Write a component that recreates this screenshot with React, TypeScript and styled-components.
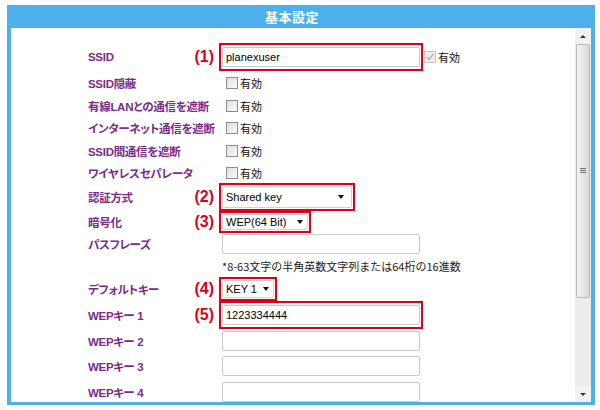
import React from 'react';
import styled, { createGlobalStyle } from 'styled-components';

const GlobalStyle = createGlobalStyle`
  html, body {
    margin: 0;
    padding: 0;
    background: #fff;
  }
  body {
    font-family: "Noto Sans CJK JP", "Liberation Sans", sans-serif;
  }
`;

const Window = styled.div`
  margin: 5px 0 0 7px;
  width: 588px;
  height: 400px;
  box-sizing: border-box;
  background: #4cb0ec;
  padding: 0 4px 3px 4px;
  display: flex;
  flex-direction: column;
`;

const Title = styled.div`
  height: 23px;
  flex: none;
  display: flex;
  align-items: center;
  justify-content: center;
  padding-right: 18px;
  color: #fff;
  font-weight: 700;
  font-size: 13px;
  letter-spacing: 0.5px;
`;

const Body = styled.div`
  flex: 1;
  min-height: 0;
  display: flex;
  background: #fff;
  overflow: hidden;
`;

const Content = styled.div`
  flex: 1;
  padding: 15px 0 0 77px;
  overflow: hidden;
`;

const Row = styled.div<{ $h: number }>`
  display: flex;
  align-items: center;
  height: ${(p) => p.$h}px;
`;

const LabelCell = styled.div`
  width: 131px;
  flex: none;
  display: flex;
  align-items: center;
  padding-right: 5px;
  box-sizing: border-box;
`;

const Label = styled.span`
  color: #7b2b88;
  font-family: "Liberation Sans", "Noto Sans CJK JP", sans-serif;
  font-weight: 700;
  font-size: 11.5px;
  letter-spacing: -0.3px;
  font-feature-settings: "palt";
  white-space: nowrap;
`;

const Marker = styled.span`
  margin-left: auto;
  color: #df0018;
  font: 700 16px "Liberation Sans", sans-serif;
  line-height: 1;
`;

const Mark = styled.div<{ $on?: boolean; $tall?: boolean }>`
  display: inline-flex;
  align-items: center;
  border: 2px solid ${(p) => (p.$on ? '#df0018' : 'transparent')};
  padding: ${(p) => (p.$tall ? '2px 1px' : '1px')};
`;

const TextBox = styled.input`
  width: 198px;
  height: 20px;
  box-sizing: border-box;
  margin: 0;
  border: 1px solid #c9c9c9;
  border-radius: 2px;
  padding: 0 3px;
  font: 11px "Liberation Sans", sans-serif;
  color: #000;
  background: #fff;
  outline: none;
`;

const Select = styled.div<{ $w: number; $h: number; $pr: number }>`
  width: ${(p) => p.$w}px;
  height: ${(p) => p.$h}px;
  box-sizing: border-box;
  border: 1px solid #d2d2d2;
  border-radius: 2px;
  display: flex;
  align-items: center;
  justify-content: space-between;
  padding: 0 ${(p) => p.$pr}px 0 3px;
  font: 11px "Liberation Sans", sans-serif;
  color: #000;
  background: #fff;
  white-space: nowrap;
`;

const Caret = styled.span`
  width: 0;
  height: 0;
  border-left: 3.5px solid transparent;
  border-right: 3.5px solid transparent;
  border-top: 4px solid #111;
`;

const Option = styled.label<{ $gap?: number }>`
  display: inline-flex;
  align-items: center;
  margin-left: ${(p) => p.$gap ?? 4}px;
  font-size: 11px;
  color: #111;
`;

const Check = styled.span<{ $disabled?: boolean }>`
  width: 12px;
  height: 12px;
  box-sizing: border-box;
  margin-right: 2px;
  border: 1px solid ${(p) => (p.$disabled ? '#c4c4c4' : '#8c8c8c')};
  background: ${(p) =>
    p.$disabled ? '#eeeeee' : 'linear-gradient(135deg, #dedede, #fbfbfb)'};
  display: flex;
  align-items: center;
  justify-content: center;
`;

const Note = styled.div`
  padding-left: 3px;
  font-size: 11px;
  color: #222;
  white-space: nowrap;
`;

const Scrollbar = styled.div`
  width: 16px;
  flex: none;
  background: #ececec;
  display: flex;
  flex-direction: column;
`;

const ScrollButton = styled.div`
  height: 16px;
  flex: none;
  display: flex;
  align-items: center;
  justify-content: center;
  background: #f2f2f2;
`;

const Arrow = styled.span<{ $up?: boolean }>`
  width: 0;
  height: 0;
  border-left: 3px solid transparent;
  border-right: 3px solid transparent;
  ${(p) => (p.$up ? 'border-bottom: 3px solid #333;' : 'border-top: 3px solid #333;')}
`;

const Thumb = styled.div`
  height: 254px;
  flex: none;
  margin: 0 1px;
  box-sizing: border-box;
  border: 1px solid #b7b7b7;
  border-radius: 2px;
  background: linear-gradient(to right, #f4f4f4, #dadada);
  display: flex;
  align-items: center;
  justify-content: center;
`;

const Track = styled.div`
  flex: 1;
`;

const Grip = () => (
  <svg width="6" height="6" viewBox="0 0 6 6">
    <path d="M0 0.5h6M0 2.5h6M0 4.5h6" stroke="#6f6f6f" strokeWidth="1" />
  </svg>
);

const Tick = () => (
  <svg width="10" height="10" viewBox="0 0 10 10">
    <path d="M2 5l2 2.5L8.5 2" fill="none" stroke="#b3b3b3" strokeWidth="1.4" />
  </svg>
);

const Enabled = ({ gap, disabled }: { gap?: number; disabled?: boolean }) => (
  <Option $gap={gap}>
    <Check $disabled={disabled}>{disabled && <Tick />}</Check>
    有効
  </Option>
);

const Field = ({ label, marker, h, children }: { label?: string; marker?: string; h: number; children?: React.ReactNode }) => (
  <Row $h={h}>
    <LabelCell>
      {label && <Label>{label}</Label>}
      {marker && <Marker>{marker}</Marker>}
    </LabelCell>
    {children}
  </Row>
);

const toggles: [string, number][] = [
  ['SSID隠蔽', 23],
  ['有線LANとの通信を遮断', 23],
  ['インターネット通信を遮断', 22],
  ['SSID間通信を遮断', 23],
  ['ワイヤレスセパレータ', 21],
];

const App = () => {
  return (
    <>
      <GlobalStyle />
      <Window>
        <Title>基本設定</Title>
        <Body>
          <Content>
            <Field label="SSID" marker="(1)" h={28}>
              <Mark $on $tall>
                <TextBox readOnly value="planexuser" />
              </Mark>
              <Enabled gap={1} disabled />
            </Field>
            {toggles.map(([label, h]) => (
              <Field key={label} label={label} h={h}>
                <Mark>
                  <Enabled />
                </Mark>
              </Field>
            ))}
            <Field label="認証方式" marker="(2)" h={28}>
              <Mark $on>
                <Select $w={130} $h={22} $pr={7}>
                  Shared key
                  <Caret />
                </Select>
              </Mark>
            </Field>
            <Field label="暗号化" marker="(3)" h={22}>
              <Mark $on>
                <Select $w={86} $h={16} $pr={4}>
                  WEP(64 Bit)
                  <Caret />
                </Select>
              </Mark>
            </Field>
            <Field label="パスフレーズ" h={21}>
              <Mark>
                <TextBox readOnly value="" />
              </Mark>
            </Field>
            <Field h={23}>
              <Note>*8-63文字の半角英数文字列または64桁の16進数</Note>
            </Field>
            <Field label="デフォルトキー" marker="(4)" h={24}>
              <Mark $on>
                <Select $w={52} $h={18} $pr={4}>
                  KEY 1
                  <Caret />
                </Select>
              </Mark>
            </Field>
            <Field label="WEPキー 1" marker="(5)" h={28}>
              <Mark $on $tall>
                <TextBox readOnly value="1223334444" />
              </Mark>
            </Field>
            <Field label="WEPキー 2" h={24}>
              <Mark>
                <TextBox readOnly value="" />
              </Mark>
            </Field>
            <Field label="WEPキー 3" h={26}>
              <Mark>
                <TextBox readOnly value="" />
              </Mark>
            </Field>
            <Field label="WEPキー 4" h={26}>
              <Mark>
                <TextBox readOnly value="" />
              </Mark>
            </Field>
          </Content>
          <Scrollbar>
            <ScrollButton>
              <Arrow $up />
            </ScrollButton>
            <Thumb>
              <Grip />
            </Thumb>
            <Track />
            <ScrollButton>
              <Arrow />
            </ScrollButton>
          </Scrollbar>
        </Body>
      </Window>
    </>
  );
};

export default App;
